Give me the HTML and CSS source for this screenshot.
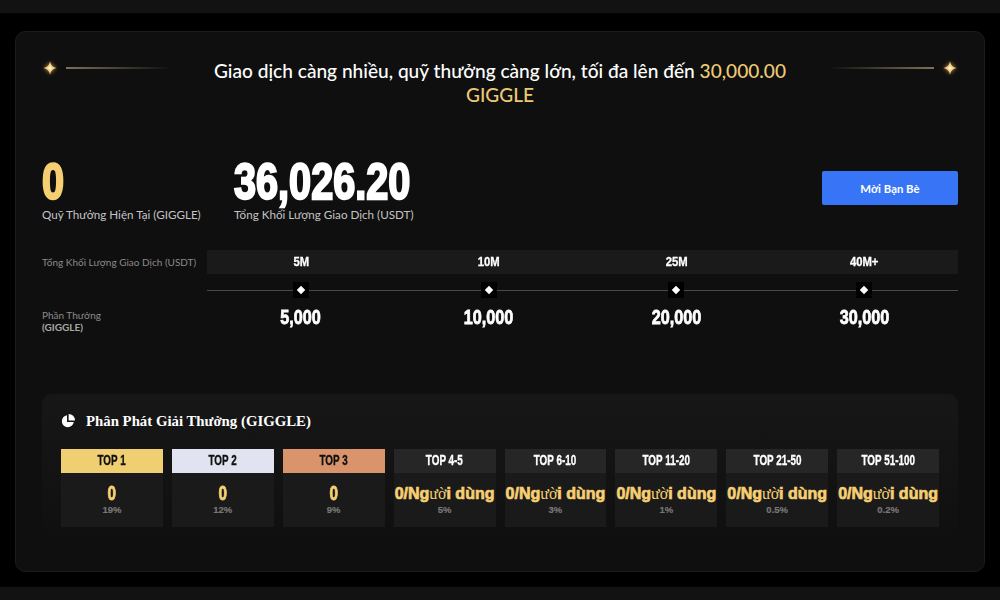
FILE: index.html
```html
<!DOCTYPE html>
<html lang="vi">
<head>
    <meta charset="UTF-8">
    <meta name="viewport" content="width=device-width, initial-scale=1.0">
    <title>Phân Phát Giải Thưởng</title>
    <link rel="stylesheet" href="styles.css">
</head>
<body>
    <div class="topbar"></div>
    <main class="card">
        <div class="banner">
            <svg class="star" viewBox="0 0 16 16"><path d="M8 1.5Q9 7 14.5 8 9 9 8 14.5 7 9 1.5 8 7 7 8 1.5Z" fill="#f3d28e"/><circle cx="8" cy="8" r="1.6" fill="#fff3d6"/></svg>
            <div class="rule rule-left"></div>
            <h1 class="headline">Giao dịch càng nhiều, quỹ thưởng càng lớn, tối đa lên đến <span class="gold">30,000.00</span><br><span class="gold">GIGGLE</span></h1>
            <div class="rule rule-right"></div>
            <svg class="star" viewBox="0 0 16 16"><path d="M8 1.5Q9 7 14.5 8 9 9 8 14.5 7 9 1.5 8 7 7 8 1.5Z" fill="#f3d28e"/><circle cx="8" cy="8" r="1.6" fill="#fff3d6"/></svg>
        </div>

        <div class="stats">
            <div class="stat stat-pool">
                <div class="stat-num gold">0</div>
                <div class="stat-label">Quỹ Thưởng Hiện Tại (GIGGLE)</div>
            </div>
            <div class="stat">
                <div class="stat-num">36,026.20</div>
                <div class="stat-label">Tổng Khối Lượng Giao Dịch (USDT)</div>
            </div>
            <button class="invite">Mời Bạn Bè</button>
        </div>

        <div class="tiers">
            <div class="tier-label">Tổng Khối Lượng Giao Dịch (USDT)</div>
            <div class="tier-head">
                <span>5M</span><span>10M</span><span>25M</span><span>40M+</span>
            </div>
            <div class="tier-axis">
                <span><i></i></span><span><i></i></span><span><i></i></span><span><i></i></span>
            </div>
            <div class="tier-label tier-reward">Phần Thưởng<br><b>(GIGGLE)</b></div>
            <div class="tier-values">
                <span>5,000</span><span>10,000</span><span>20,000</span><span>30,000</span>
            </div>
        </div>

        <section class="dist">
            <h2 class="dist-title">
                <svg class="pie" viewBox="0 0 14 14"><path d="M6 1.2A6 6 0 1 0 12.8 8H6Z" fill="#fff"/><path d="M7.6 0A6.4 6.4 0 0 1 14 6.4H7.6Z" fill="#fff"/></svg>
                Phân Phát Giải Thưởng (GIGGLE)
            </h2>
            <div class="ranks">
                <div class="rank">
                    <div class="rank-head first"><span>TOP 1</span></div>
                    <div class="rank-body"><div class="rank-val"><span>0</span></div><div class="rank-pct">19%</div></div>
                </div>
                <div class="rank">
                    <div class="rank-head second"><span>TOP 2</span></div>
                    <div class="rank-body"><div class="rank-val"><span>0</span></div><div class="rank-pct">12%</div></div>
                </div>
                <div class="rank">
                    <div class="rank-head third"><span>TOP 3</span></div>
                    <div class="rank-body"><div class="rank-val"><span>0</span></div><div class="rank-pct">9%</div></div>
                </div>
                <div class="rank">
                    <div class="rank-head"><span>TOP 4-5</span></div>
                    <div class="rank-body"><div class="rank-val wide">0/Ng<em>ườ</em>i dùng</div><div class="rank-pct">5%</div></div>
                </div>
                <div class="rank">
                    <div class="rank-head"><span>TOP 6-10</span></div>
                    <div class="rank-body"><div class="rank-val wide">0/Ng<em>ườ</em>i dùng</div><div class="rank-pct">3%</div></div>
                </div>
                <div class="rank">
                    <div class="rank-head"><span>TOP 11-20</span></div>
                    <div class="rank-body"><div class="rank-val wide">0/Ng<em>ườ</em>i dùng</div><div class="rank-pct">1%</div></div>
                </div>
                <div class="rank">
                    <div class="rank-head"><span>TOP 21-50</span></div>
                    <div class="rank-body"><div class="rank-val wide">0/Ng<em>ườ</em>i dùng</div><div class="rank-pct">0.5%</div></div>
                </div>
                <div class="rank">
                    <div class="rank-head"><span>TOP 51-100</span></div>
                    <div class="rank-body"><div class="rank-val wide">0/Ng<em>ườ</em>i dùng</div><div class="rank-pct">0.2%</div></div>
                </div>
            </div>
        </section>
    </main>
    <div class="bottombar"></div>
</body>
</html>
```

FILE: styles.css
```css
* {
    box-sizing: border-box;
}
body {
    margin: 0;
    height: 600px;
    overflow: hidden;
    background-color: #000;
    color: #fff;
    font-family: "Lato", "Liberation Sans", sans-serif;
}
.topbar {
    height: 13px;
    background-color: #121212;
}
.bottombar {
    height: 13px;
    margin-top: 15px;
    background-color: #121212;
}
.gold {
    color: #f5cf72;
}
.card {
    height: 541px;
    margin: 18px 15px 0;
    padding: 22px 26px 0;
    background-color: #0f0f0f;
    border: 1px solid #1b1b1b;
    border-radius: 10px;
}
.banner {
    display: flex;
    align-items: flex-start;
    height: 102px;
}
.star {
    flex: none;
    width: 16px;
    height: 16px;
    margin: 6px 0 0;
    filter: drop-shadow(0 0 2px #d89a3e);
}
.rule {
    flex: none;
    width: 106px;
    height: 2px;
    margin: 13px 0 0 8px;
    background: linear-gradient(90deg, #7d7157, rgba(125, 113, 87, 0));
}
.rule-right {
    margin: 13px 8px 0 0;
    background: linear-gradient(270deg, #7d7157, rgba(125, 113, 87, 0));
}
.headline {
    flex: 1;
    margin: 5px 0 0;
    font-size: 19.1px;
    font-weight: 500;
    line-height: 24px;
    text-align: center;
}
.headline .gold {
    color: #ecca74;
}
.stats {
    display: flex;
    align-items: flex-start;
    height: 89px;
    margin-top: 5px;
}
.stat-pool {
    width: 192px;
}
.stat-num {
    font-family: "Liberation Sans", sans-serif;
    font-size: 48px;
    font-weight: 700;
    line-height: 42px;
    -webkit-text-stroke: 2.2px currentColor;
    transform: scale(0.826, 1.04);
    transform-origin: left center;
    white-space: nowrap;
}
.stat-label {
    margin-top: 5px;
    font-size: 11.65px;
    line-height: 14px;
    color: #c4c4c4;
}
.invite {
    width: 136px;
    height: 34px;
    margin: 10px 0 0 auto;
    border: none;
    border-radius: 2px;
    background-color: #3875f6;
    color: #fff;
    font-family: inherit;
    font-size: 11.4px;
    font-weight: 700;
}
.tiers {
    display: grid;
    grid-template-columns: 165px 1fr;
}
.tier-label {
    font-size: 10px;
    line-height: 24px;
    color: #8a8a8a;
}
.tier-reward {
    grid-column: 1;
    grid-row: 2 / 4;
    align-self: end;
    line-height: 12px;
}
.tier-reward b {
    font-size: 10px;
    color: #a8a8a8;
}
.tier-head,
.tier-axis,
.tier-values {
    grid-column: 2;
    display: grid;
    grid-template-columns: repeat(4, 1fr);
    justify-items: center;
}
.tier-head {
    height: 24px;
    background-color: #1a1a1a;
    font-family: "Liberation Sans", sans-serif;
    font-size: 12px;
    font-weight: 700;
    line-height: 24px;
}
.tier-head span {
    display: inline-block;
    transform: scale(0.94, 1.1);
    -webkit-text-stroke: 0.3px currentColor;
}
.tier-axis {
    height: 32px;
    align-items: center;
    background: linear-gradient(#4a4a4a, #4a4a4a) center / 100% 1px no-repeat;
}
.tier-axis span {
    display: flex;
    align-items: center;
    justify-content: center;
    width: 16px;
    height: 16px;
    background-color: #000;
}
.tier-axis i {
    width: 6px;
    height: 6px;
    background-color: #fff;
    transform: rotate(45deg);
}
.tier-values {
    height: 27px;
    font-family: "Liberation Sans", sans-serif;
    font-size: 18px;
    font-weight: 700;
    line-height: 24px;
    -webkit-text-stroke: 0.7px currentColor;
}
.tier-values span {
    display: inline-block;
    transform: scale(0.9, 1.08);
}
.dist {
    height: 150px;
    margin-top: 61px;
    padding: 18px 19px 0;
    border-radius: 10px;
    background: linear-gradient(#171717, #0f0f0f);
}
.dist-title {
    display: flex;
    align-items: center;
    gap: 11px;
    height: 18px;
    margin: 0 0 19px;
    font-family: "Liberation Serif", serif;
    font-size: 14.8px;
    font-weight: 700;
}
.pie {
    width: 14px;
    height: 14px;
}
.ranks {
    display: grid;
    grid-template-columns: repeat(8, 1fr);
    gap: 9px;
}
.rank-head {
    height: 24px;
    background-color: #262626;
    font-family: "Liberation Sans", sans-serif;
    font-size: 13px;
    font-weight: 700;
    line-height: 24px;
    text-align: center;
}
.rank-head span {
    display: inline-block;
    transform: scale(0.76, 1.1);
    -webkit-text-stroke: 0.3px currentColor;
    white-space: nowrap;
}
.rank-head.first {
    background-color: #f0cf72;
    color: #111;
}
.rank-head.second {
    background-color: #e1e4f0;
    color: #111;
}
.rank-head.third {
    background-color: #d9946c;
    color: #111;
}
.rank-body {
    height: 54px;
    padding-top: 12px;
    background-color: #1a1a1a;
    text-align: center;
}
.rank-val {
    font-family: "Liberation Sans", sans-serif;
    font-size: 17px;
    font-weight: 700;
    line-height: 17px;
    color: #f5cf72;
    -webkit-text-stroke: 0.7px currentColor;
    white-space: nowrap;
}
.rank-val span {
    display: inline-block;
    transform: scale(0.9, 1.2);
}
.rank-val.wide {
    font-size: 16px;
}
.rank-val em {
    font-family: "Liberation Serif", serif;
    font-style: normal;
    font-weight: 400;
    -webkit-text-stroke: 0;
}
.rank-pct {
    margin-top: 2px;
    font-family: "Liberation Sans", sans-serif;
    font-size: 9.5px;
    font-weight: 700;
    line-height: 12px;
    color: #777;
    -webkit-text-stroke: 0.2px currentColor;
}
```
